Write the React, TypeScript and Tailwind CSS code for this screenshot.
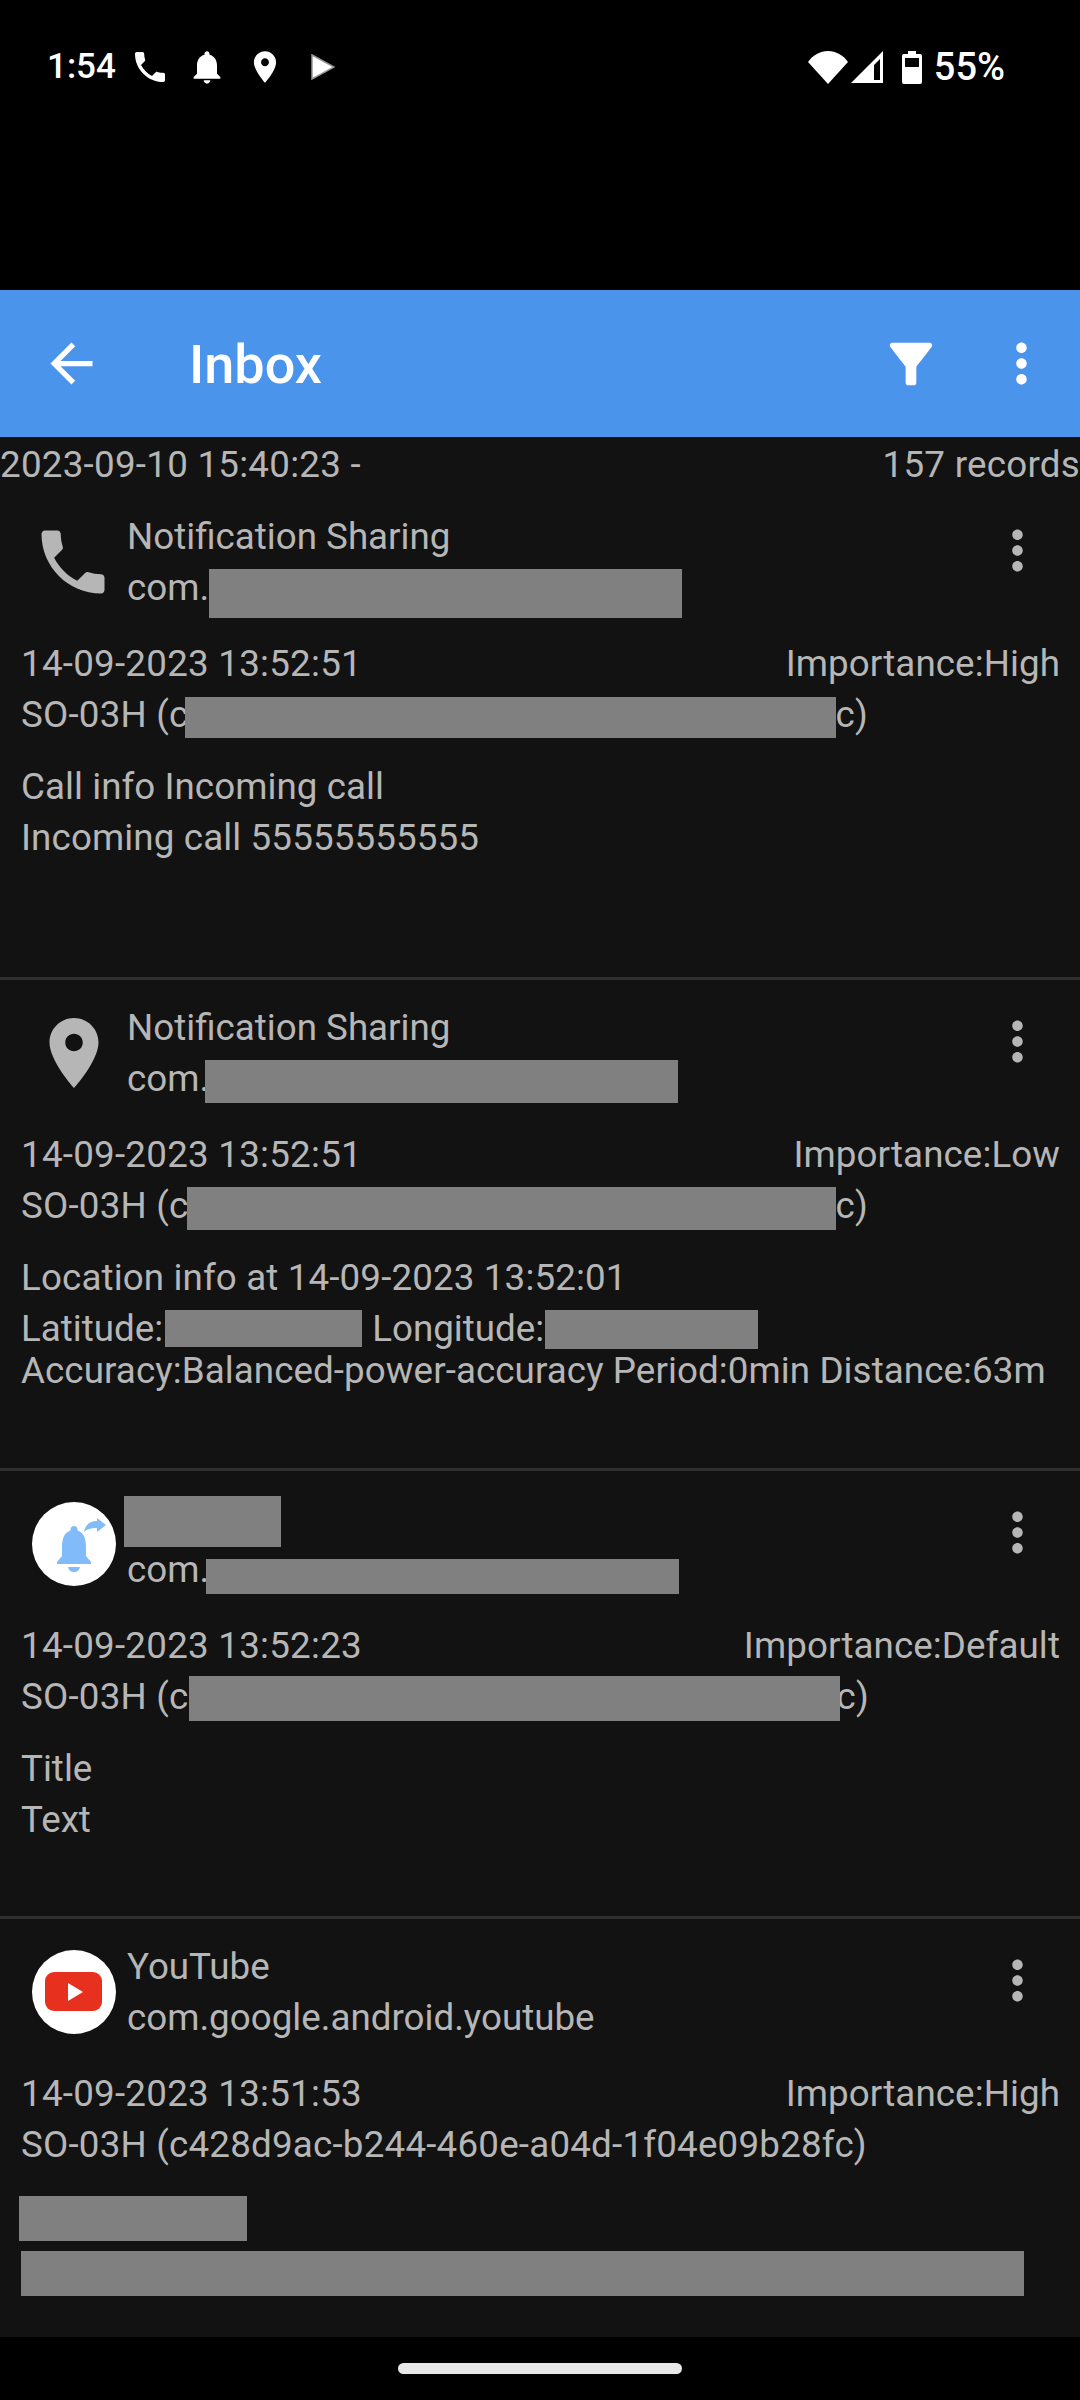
import type { ReactNode } from "react";

const CALL =
  "M6.62 10.79c1.44 2.83 3.76 5.14 6.59 6.59l2.2-2.2c.27-.27.67-.36 1.02-.24 1.12.37 2.33.57 3.57.57.55 0 1 .45 1 1V20c0 .55-.45 1-1 1-9.39 0-17-7.61-17-17 0-.55.45-1 1-1h3.5c.55 0 1 .45 1 1 0 1.25.2 2.45.57 3.57.11.35.03.74-.25 1.02l-2.2 2.2z";
const BELL =
  "M12 22c1.1 0 2-.9 2-2h-4c0 1.1.89 2 2 2zm6-6v-5c0-3.07-1.64-5.64-4.5-6.32V4c0-.83-.67-1.5-1.5-1.5s-1.5.67-1.5 1.5v.68C7.63 5.36 6 7.92 6 11v5l-2 2v1h16v-1l-2-2z";
const PLACE =
  "M12 2C8.13 2 5 5.13 5 9c0 5.25 7 13 7 13s7-7.75 7-13c0-3.87-3.13-7-7-7zm0 9.5c-1.38 0-2.5-1.12-2.5-2.5s1.12-2.5 2.5-2.5 2.5 1.12 2.5 2.5-1.12 2.5-2.5 2.5z";
const MORE =
  "M12 8c1.1 0 2-.9 2-2s-.9-2-2-2-2 .9-2 2 .9 2 2 2zm0 2c-1.1 0-2 .9-2 2s.9 2 2 2 2-.9 2-2-.9-2-2-2zm0 6c-1.1 0-2 .9-2 2s.9 2 2 2 2-.9 2-2-.9-2-2-2z";
const FILTER =
  "M4.25 5.61C6.27 8.2 10 13 10 13v6c0 .55.45 1 1 1h2c.55 0 1-.45 1-1v-6s3.72-4.8 5.74-7.39c.51-.66.04-1.61-.79-1.61H5.04c-.83 0-1.3.95-.79 1.61z";
const BACK = "M20 11H7.83l5.59-5.59L12 4l-8 8 8 8 1.41-1.41L7.83 13H20v-2z";

function Icon({ d, className }: { d: string; className: string }) {
  return (
    <svg viewBox="0 0 24 24" fill="currentColor" className={className}>
      <path d={d} />
    </svg>
  );
}

function Line({ children, className = "" }: { children: ReactNode; className?: string }) {
  return <div className={`flex h-[51px] items-center whitespace-pre ${className}`}>{children}</div>;
}

function Redact({ className }: { className: string }) {
  return <span className={`block shrink-0 bg-[#808080] ${className}`} />;
}

function StatusBar() {
  return (
    <div className="flex h-[290px] items-start justify-between bg-black pt-[48px] pr-[75px] pl-[47px] text-white">
      <div className="flex h-[38px] items-center">
        <span className="text-[35px] font-medium">1:54</span>
        <Icon d={CALL} className="ml-[14px] h-[40px] w-[40px]" />
        <Icon d={BELL} className="ml-[17px] h-[40px] w-[40px]" />
        <Icon d={PLACE} className="ml-[19px] h-[38px] w-[38px]" />
        <svg viewBox="0 0 24 26" className="ml-[27px] h-[26px] w-[24px]">
          <path d="M1 1 23 13 1 25z" fill="#fff" stroke="#999" strokeWidth="1.5" />
        </svg>
      </div>
      <div className="flex h-[38px] items-center">
        <svg viewBox="0 0 40 33" className="h-[33px] w-[40px]">
          <path d="M0 11C5 4 12 0 20 0s15 4 20 11L20 33z" fill="#fff" />
        </svg>
        <svg viewBox="0 0 32 32" className="ml-[3px] h-[32px] w-[32px]">
          <path fillRule="evenodd" d="M32 0V32H0zM29 8 23 14V29H29z" fill="#fff" />
        </svg>
        <svg viewBox="0 0 20 33" className="ml-[19px] h-[33px] w-[20px]">
          <path fillRule="evenodd" d="M6 0h8v3h4a2 2 0 0 1 2 2v26a2 2 0 0 1-2 2H2a2 2 0 0 1-2-2V5a2 2 0 0 1 2-2h4zM3 7v9h14V7z" fill="#fff" />
        </svg>
        <span className="ml-[12px] text-[38px] font-medium">55%</span>
      </div>
    </div>
  );
}

function AppBar() {
  return (
    <div className="flex h-[147px] items-center bg-[#4a94ec] text-white">
      <Icon d={BACK} className="ml-[40px] h-[63px] w-[63px]" />
      <span className="mt-[2px] ml-[86px] text-[54px] font-medium">Inbox</span>
      <Icon d={FILTER} className="ml-auto h-[64px] w-[64px]" />
      <Icon d={MORE} className="mr-[27px] ml-[47px] h-[63px] w-[63px]" />
    </div>
  );
}

function BellBadge() {
  return (
    <svg viewBox="0 0 84 84" className="h-[84px] w-[84px]">
      <circle cx="42" cy="42" r="42" fill="#fff" />
      <path
        fill="#82bbf9"
        d="M42 24c-2 0-3.500 1.500-3.500 3.500v1C31 31 30 39 30 46v8l-5 6v2h34v-2l-5-6v-8c0-7-1-15-8.500-17.500v-1c0-2-1.500-3.500-3.500-3.500zM36 65c1 4 3 5 6 5s5-1 6-5z"
      />
      <path fill="#82bbf9" d="M52 30c1-7 6-11 13-11v-3l9 7-9 7v-4c-6 0-10 1-13 4z" />
    </svg>
  );
}

function YoutubeBadge() {
  return (
    <svg viewBox="0 0 84 84" className="h-[84px] w-[84px]">
      <circle cx="42" cy="42" r="42" fill="#fff" />
      <rect x="13" y="22" width="57" height="39" rx="9" fill="#e8301f" />
      <path d="M36 33 51 42 36 51z" fill="#fff" />
    </svg>
  );
}

function Row({
  icon,
  iconClass = "pl-[11px]",
  name,
  pkg,
  date,
  importance,
  device,
  children,
  className,
}: {
  icon: ReactNode;
  iconClass?: string;
  name: ReactNode;
  pkg: ReactNode;
  date: string;
  importance: string;
  device: ReactNode;
  children: ReactNode;
  className: string;
}) {
  return (
    <section className={`pr-[20px] pl-[21px] ${className}`}>
      <div className="flex items-start">
        <div className={`mt-[9px] h-[84px] w-[106px] shrink-0 ${iconClass}`}>{icon}</div>
        <div className="flex-1">
          <Line>{name}</Line>
          <Line>{pkg}</Line>
        </div>
        <Icon d={MORE} className="mt-[8px] mr-[11px] h-[63px] w-[63px]" />
      </div>
      <Line className="mt-[25px] justify-between">
        <span className="tracking-[0.24px]">{date}</span>
        <span className="tracking-[0.08px]">{importance}</span>
      </Line>
      <Line className="tracking-[0.2px]">{device}</Line>
      <div className="mt-[21px]">{children}</div>
    </section>
  );
}

export default function App() {
  return (
    <div
      className="flex h-[2400px] w-[1080px] flex-col overflow-hidden bg-[#121212] text-[36.75px] text-[#b6b6b6]"
      style={{ fontFamily: "Roboto, sans-serif" }}
    >
      <StatusBar />
      <AppBar />
      <div className="flex h-[49px] shrink-0 items-center justify-between pt-[6px] tracking-[0.25px]">
        <span>2023-09-10 15:40:23 -</span>
        <span>157 records</span>
      </div>

      <Row
        className="h-[491px] shrink-0 pt-[25px]"
        iconClass="pl-[10px]"
        icon={<Icon d={CALL} className="h-[84px] w-[84px]" />}
        name="Notification Sharing"
        pkg={
          <>
            com.
            <Redact className="mt-[12px] h-[49px] w-[473px]" />
          </>
        }
        date="14-09-2023 13:52:51"
        importance="Importance:High"
        device={
          <>
            SO-03H (c
            <Redact className="mt-[6px] ml-[-4px] h-[41px] w-[651px]" />
            c)
          </>
        }
      >
        <Line className="tracking-[0.05px]">Call info Incoming call</Line>
        <Line className="tracking-[0.12px]">Incoming call 55555555555</Line>
      </Row>

      <Row
        className="h-[491px] shrink-0 border-t-[3px] border-[#2f2f2f] pt-[22px]"
        icon={<Icon d={PLACE} className="h-[84px] w-[84px]" />}
        name="Notification Sharing"
        pkg={
          <>
            com.
            <Redact className="mt-[5px] ml-[-4px] h-[43px] w-[473px]" />
          </>
        }
        date="14-09-2023 13:52:51"
        importance="Importance:Low"
        device={
          <>
            SO-03H (c
            <Redact className="mt-[6px] ml-[-2px] h-[43px] w-[649px]" />
            c)
          </>
        }
      >
        <Line className="tracking-[0.13px]">Location info at 14-09-2023 13:52:01</Line>
        <Line>
          Latitude:
          <Redact className="ml-[2px] h-[37px] w-[197px]" />
          <span className="ml-[10px]">Longitude:</span>
          <Redact className="mt-[2px] ml-[1px] h-[39px] w-[213px]" />
        </Line>
        <Line className="mt-[-9px] tracking-[0.08px]">
          Accuracy:Balanced-power-accuracy Period:0min Distance:63m
        </Line>
      </Row>

      <Row
        className="h-[448px] shrink-0 border-t-[3px] border-[#2f2f2f] pt-[22px]"
        icon={<BellBadge />}
        name={<Redact className="mt-[5px] ml-[-3px] h-[51px] w-[157px]" />}
        pkg={
          <>
            com.
            <Redact className="mt-[14px] ml-[-3px] h-[35px] w-[473px]" />
          </>
        }
        date="14-09-2023 13:52:23"
        importance="Importance:Default"
        device={
          <>
            SO-03H (c
            <Redact className="relative z-10 mt-[3px] mr-[-3px] h-[45px] w-[651px]" />
            c)
          </>
        }
      >
        <Line>Title</Line>
        <Line>Text</Line>
      </Row>

      <Row
        className="min-h-0 flex-1 border-t-[3px] border-[#2f2f2f] pt-[22px]"
        icon={<YoutubeBadge />}
        name="YouTube"
        pkg="com.google.android.youtube"
        date="14-09-2023 13:51:53"
        importance="Importance:High"
        device="SO-03H (c428d9ac-b244-460e-a04d-1f04e09b28fc)"
      >
        <Redact className="mt-[26px] ml-[-2px] h-[45px] w-[228px]" />
        <Redact className="mt-[10px] h-[45px] w-[1003px]" />
      </Row>

      <div className="flex h-[63px] shrink-0 justify-center bg-black pt-[26px]">
        <div className="h-[11px] w-[284px] rounded-full bg-[#e8e8e8]" />
      </div>
    </div>
  );
}
